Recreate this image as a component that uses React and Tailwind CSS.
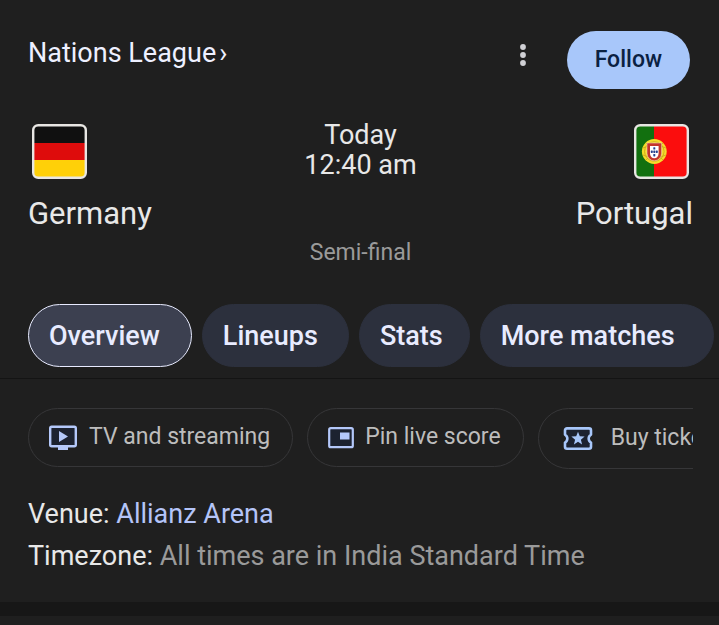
import React, { useState } from 'react';

const tabs = [
    { name: 'Overview', padding: 'pl-5 pr-[31px]' },
    { name: 'Lineups', padding: 'pl-5 pr-[30px]' },
    { name: 'Stats', padding: 'pl-5 pr-[26px]' },
    { name: 'More matches', padding: 'pl-5 pr-[38px]' },
];

function GermanyFlag() {
    return (
        <svg viewBox="0 0 55 55" className="w-[55px] h-[55px]" role="img" aria-label="Flag of Germany">
            <defs>
                <clipPath id="de-clip"><rect x="1" y="1" width="53" height="53" rx="5" /></clipPath>
            </defs>
            <g clipPath="url(#de-clip)">
                <rect width="55" height="19" fill="#101010" />
                <rect y="19" width="55" height="17" fill="#de0c0c" />
                <rect y="36" width="55" height="19" fill="#ffd008" />
            </g>
            <rect x="1.2" y="1.2" width="52.6" height="52.6" rx="5" fill="none" stroke="#e8e6e3" strokeWidth="2.4" />
        </svg>
    );
}

function PortugalFlag() {
    return (
        <svg viewBox="0 0 55 55" className="w-[55px] h-[55px]" role="img" aria-label="Flag of Portugal">
            <defs>
                <clipPath id="pt-clip"><rect x="1" y="1" width="53" height="53" rx="5" /></clipPath>
            </defs>
            <g clipPath="url(#pt-clip)">
                <rect width="20" height="55" fill="#12700f" />
                <rect x="20" width="35" height="55" fill="#fb0d0d" />
            </g>
            {/* Armillary sphere */}
            <circle cx="20.3" cy="27.5" r="12.4" fill="#f5dc2a" />
            <circle cx="20.3" cy="27.5" r="9.8" fill="none" stroke="#c8a41c" strokeWidth="0.8" />
            <path d="M9 24c7-3 16-3 23 0M9 31c7 3 16 3 23 0M12 19l17 17M29 19L12 36" fill="none" stroke="#c8a41c" strokeWidth="0.8" />
            {/* Shield */}
            <path d="M13 19h14.600v10.300a7.300 7.500 0 0 1-14.600 0z" fill="#c4352b" stroke="#f4e4d0" strokeWidth="0.5" />
            <path d="M16 22h8.600v7.500a4.300 4.800 0 0 1-8.600 0z" fill="#fff" />
            <g fill="#25418f">
                <rect x="19.300" y="23.200" width="2" height="2.400" rx="0.600" />
                <rect x="16.800" y="26.500" width="2" height="2.400" rx="0.600" />
                <rect x="19.300" y="26.500" width="2" height="2.400" rx="0.600" />
                <rect x="21.800" y="26.500" width="2" height="2.400" rx="0.600" />
                <rect x="19.300" y="30" width="2" height="2.400" rx="0.600" />
            </g>
            <rect x="1.2" y="1.2" width="52.6" height="52.6" rx="5" fill="none" stroke="#e8e6e3" strokeWidth="2.4" />
        </svg>
    );
}

function TvIcon() {
    return (
        <svg viewBox="0 0 30 26" className="w-[30px] h-[26px] shrink-0" aria-hidden="true">
            <rect x="2.200" y="1.700" width="25.600" height="19.600" rx="1.500" fill="#1c2230" stroke="#b4c8fa" strokeWidth="2.400" />
            <path d="M11 6v11l9-5.500z" fill="#b4c8fa" />
            <path d="M10 21.500h10v3.500H10z" fill="#b4c8fa" />
        </svg>
    );
}

function PinIcon() {
    return (
        <svg viewBox="0 0 28 26" className="w-7 h-[26px] shrink-0" aria-hidden="true">
            <rect x="2.200" y="3.200" width="23.600" height="19" rx="1.500" fill="#1c2230" stroke="#b4c8fa" strokeWidth="2.200" />
            <rect x="13" y="7.500" width="9.500" height="7" fill="#b4c8fa" />
        </svg>
    );
}

function TicketIcon() {
    return (
        <svg viewBox="0 0 30 26" className="w-[30px] h-[26px] shrink-0" aria-hidden="true">
            <path
                d="M4 2.400h22a2 2 0 0 1 2 2v4.200a4.600 4.600 0 0 0 0 8v4.200a2 2 0 0 1-2 2H4a2 2 0 0 1-2-2v-4.200a4.600 4.600 0 0 0 0-8V4.400a2 2 0 0 1 2-2z"
                fill="#1c2230"
                stroke="#a8c7fa"
                strokeWidth="2.600"
                strokeLinejoin="round"
            />
            <path d="M15 5.800l1.800 4.500 4.800.3-3.700 3.100 1.200 4.700-4.100-2.600-4.100 2.600 1.200-4.700-3.700-3.100 4.800-.3z" fill="#a8c7fa" />
        </svg>
    );
}

const actions = [
    { name: 'TV and streaming', icon: TvIcon, style: 'h-[59px] gap-[11px] pl-[19px] pr-[22px]' },
    { name: 'Pin live score', icon: PinIcon, style: 'h-[59px] gap-2.5 pl-[19px] pr-[22px]' },
    { name: 'Buy tickets', icon: TicketIcon, style: 'h-[61px] gap-[18px] pl-6 pr-[22px]' },
];

export default function App() {
    const [activeTab, setActiveTab] = useState('Overview');

    return (
        <div className="min-h-screen overflow-hidden bg-[#1f1f1f] text-[#e8e8e8] font-[Roboto,sans-serif]">
            {/* League name and follow button */}
            <header className="flex items-start pt-[31px] pl-7 pr-[29px]">
                <a href="#league" className="mt-1 text-[27px] leading-9 text-[#eef0ff]">
                    Nations League<span className="ml-[3px]">›</span>
                </a>
                <button type="button" aria-label="More options" className="ml-auto mr-9 mt-2 flex h-8 w-4 items-center justify-center">
                    <svg viewBox="0 0 16 32" className="h-8 w-4" fill="#d0d0d4">
                        <circle cx="8" cy="8" r="2.900" />
                        <circle cx="8" cy="16" r="2.900" />
                        <circle cx="8" cy="24" r="2.900" />
                    </svg>
                </button>
                <button type="button" className="h-[58px] rounded-full bg-[#a8c7fa] px-7 text-[23px] font-medium text-[#0a2142]">
                    Follow
                </button>
            </header>

            {/* Teams */}
            <section className="grid grid-cols-3 pl-7 pr-[26px] pt-[35px]">
                <div>
                    <div className="pl-1"><GermanyFlag /></div>
                    <h2 className="mt-[17px] text-[31px] leading-9">Germany</h2>
                </div>
                <div className="text-center">
                    <p className="-mt-1 text-[27px] leading-[30px]">Today<br />12:40 am</p>
                    <p className="mt-[59px] text-[23px] leading-7 text-[#9a9a9a]">Semi-final</p>
                </div>
                <div className="flex flex-col items-end">
                    <div className="pr-1"><PortugalFlag /></div>
                    <h2 className="mt-[17px] text-[31px] leading-9">Portugal</h2>
                </div>
            </section>

            {/* Tabs */}
            <nav className="flex gap-2.5 overflow-hidden border-b border-[#141414] pt-[37px] pb-[11px] pl-7">
                {tabs.map(({ name, padding }) => (
                    <button
                        key={name}
                        type="button"
                        onClick={() => setActiveTab(name)}
                        className={`h-[63px] shrink-0 rounded-full border pt-0.5 text-left text-[27px] font-medium whitespace-nowrap text-[#e8ebff] ${padding} ${activeTab === name ? 'border-[#e8ebff] bg-[#3c4050]' : 'border-[#2c303d] bg-[#2c303d]'}`}
                    >
                        {name}
                    </button>
                ))}
            </nav>

            {/* Quick actions */}
            <div className="ml-7 mr-[26px] mt-[29px] flex items-start gap-3.5 overflow-hidden">
                {actions.map(({ name, icon, style }) => {
                    const Icon = icon;
                    return (
                        <button
                            key={name}
                            type="button"
                            className={`flex shrink-0 items-center rounded-full border border-[#363638] text-[23px] whitespace-nowrap text-[#bdbdbd] ${style}`}
                        >
                            <Icon />
                            {name}
                        </button>
                    );
                })}
            </div>

            {/* Match details */}
            <section className="px-7 pt-6 pb-[25px] text-[27px] leading-[42px]">
                <p>Venue: <a href="#venue" className="text-[#b4c4f8]">Allianz Arena</a></p>
                <p>Timezone: <span className="text-[#9a9a9a]">All times are in India Standard Time</span></p>
            </section>

            <div className="h-3.5 bg-[#171717]" />
        </div>
    );
}
